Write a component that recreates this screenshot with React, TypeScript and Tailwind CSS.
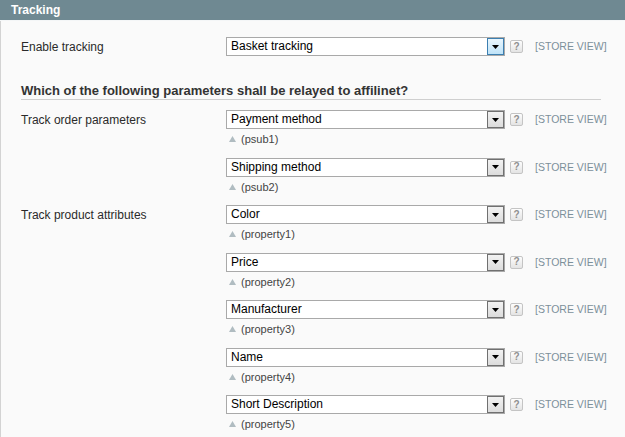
import React from 'react';

type Field = { value: string; note?: string; focused?: boolean };

const HelpIcon = () => (
  <div className="w-[13px] h-[13px] border border-[#c4c4c4] rounded-[2px] bg-gradient-to-b from-[#fdfdfd] to-[#e4e4e4] flex items-center justify-center text-[10px] font-bold leading-none text-[#8f8f8f] shrink-0">
    ?
  </div>
);

const SelectBox = ({ value, focused }: { value: string; focused?: boolean }) => (
  <div className="w-[279px] h-[19px] border border-[#a9a9a9] bg-white flex items-stretch shrink-0">
    <div className="flex-1 pl-[4px] text-[12px] leading-[17px] text-black truncate">{value}</div>
    <div
      className={
        focused
          ? 'w-[17px] border border-[#3c7fb1] bg-gradient-to-b from-[#eaf6fd] to-[#bfe3f8] flex items-center justify-center'
          : 'w-[17px] border border-[#707070] bg-gradient-to-b from-[#f2f2f2] to-[#dcdcdc] flex items-center justify-center'
      }
    >
      <svg width="7" height="4" viewBox="0 0 7 4">
        <path d="M0 0h7L3.5 4z" fill="#000" />
      </svg>
    </div>
  </div>
);

const FieldBlock = ({ field }: { field: Field }) => (
  <div className={field.note ? 'h-[47.5px]' : ''}>
    <div className="flex items-center">
      <SelectBox value={field.value} focused={field.focused} />
      <div className="ml-[5px]">
        <HelpIcon />
      </div>
      <div className="ml-[12px] text-[10.5px] text-[#7c909a] leading-none">[STORE VIEW]</div>
    </div>
    {field.note && (
      <div className="mt-[3px] flex items-center text-[11px] leading-[14px] text-[#444]">
        <svg width="7" height="6" viewBox="0 0 7 6" className="ml-[3px] mr-[5px]">
          <path d="M3.5 0L7 6H0z" fill="#b0bcc1" />
        </svg>
        {field.note}
      </div>
    )}
  </div>
);

const Row = ({ label, fields }: { label: string; fields: Field[] }) => (
  <div className="flex">
    <div className="w-[205px] h-[19px] flex items-center text-[12px] text-[#2a2a2a] shrink-0">{label}</div>
    <div className="flex flex-col">
      {fields.map((f) => (
        <FieldBlock key={f.value} field={f} />
      ))}
    </div>
  </div>
);

export default function App() {
  return (
    <div className="w-[625px] h-[437px] overflow-hidden bg-[#fafafa] font-['Liberation_Sans',Arial,sans-serif]">
      <div className="h-[21px] bg-[#6f8992] border-b border-[#f4f6f7] pl-[11px] flex items-center text-[12px] font-bold text-white">
        Tracking
      </div>
      <div className="border-l border-[#d3d3d3] h-full pl-[20px] pt-[16px]">
        <Row label="Enable tracking" fields={[{ value: 'Basket tracking', focused: true }]} />
        <div className="mt-[27px] mr-[24px] border-b border-[#cfcfcf] text-[13px] leading-[16px] font-bold text-[#333]">
          Which of the following parameters shall be relayed to affilinet?
        </div>
        <div className="mt-[10px]">
          <Row
            label="Track order parameters"
            fields={[
              { value: 'Payment method', note: '(psub1)' },
              { value: 'Shipping method', note: '(psub2)' },
            ]}
          />
          <Row
            label="Track product attributes"
            fields={[
              { value: 'Color', note: '(property1)' },
              { value: 'Price', note: '(property2)' },
              { value: 'Manufacturer', note: '(property3)' },
              { value: 'Name', note: '(property4)' },
              { value: 'Short Description', note: '(property5)' },
            ]}
          />
        </div>
      </div>
    </div>
  );
}
